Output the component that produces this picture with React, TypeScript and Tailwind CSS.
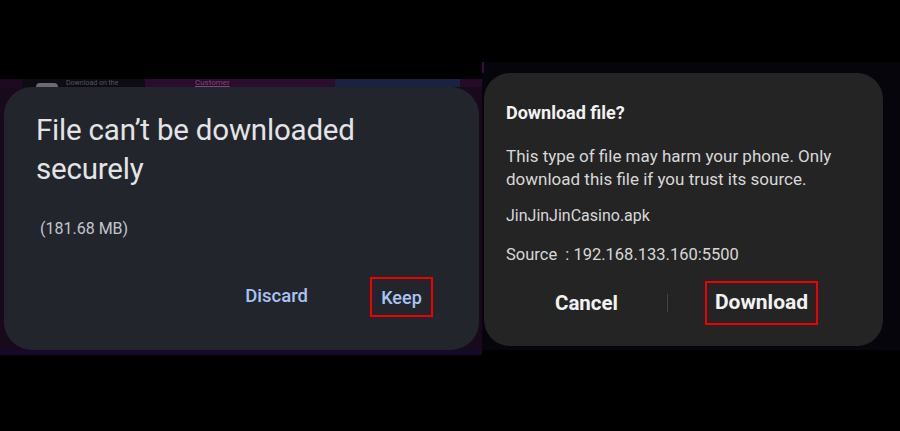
export default function App() {
  return (
    <div className="w-[900px] h-[431px] bg-black flex overflow-hidden font-['Roboto',sans-serif]">
      {/* Left screenshot: Chrome style dialog */}
      <div className="w-[482px] mt-[79px] h-[276px] bg-[#180a1c] flex flex-col">
        <div className="h-[8px] flex overflow-hidden">
          <div className="w-[22px] bg-[#1d0a20]" />
          <div className="w-[123px] bg-[#0c0c12] flex items-end pl-[14px] gap-[8px]">
            <div className="w-[22px] h-[4px] rounded-t-full bg-[#6a6a72]" />
            <span className="text-[7px] leading-[8px] text-[#55555e]">Download on the</span>
          </div>
          <div className="w-[190px] bg-[#2a0c2c] flex items-end pl-[50px]">
            <span className="text-[8px] leading-[8px] text-[#7a4a78] underline">Customer</span>
          </div>
          <div className="w-[125px] bg-[#1a2244]" />
          <div className="flex-1 bg-[#260a28]" />
        </div>
        <div className="ml-[4px] w-[475px] h-[263px] rounded-[28px] bg-[#23252c] pt-[24px] pl-[32px] flex flex-col">
          <h1 className="text-[29.5px] leading-[39px] text-[#e4e4e6] tracking-[-0.2px]">
            File can’t be downloaded
            <br />
            securely
          </h1>
          <p className="mt-[28px] ml-[4px] text-[16px] leading-[24px] text-[#c4c6cc]">(181.68 MB)</p>
          <div className="mt-[36px] flex justify-end items-center pr-[46px]">
            <span className="text-[18.5px] font-medium text-[#a9c3f2] mr-[62px]">Discard</span>
            <span className="border-2 border-[#f00000] h-[40px] w-[63px] flex items-center justify-center text-[18px] font-medium text-[#a9c3f2]">
              Keep
            </span>
          </div>
        </div>
        <div className="flex-1 bg-[#150a2a]" />
      </div>

      {/* Right screenshot: Samsung style dialog */}
      <div className="w-[418px] mt-[62px] h-[288px] bg-[#06050b] flex">
        <div className="w-[2px] h-[11px] bg-[#3a0e3c]" />
        <div className="mt-[11px] w-[399px] h-[273px] rounded-[26px] bg-[#242424] pt-[28px] pl-[22px] flex flex-col">
          <h2 className="text-[18px] leading-[24px] font-bold text-[#f3f3f3]">Download file?</h2>
          <p className="mt-[20px] text-[17px] leading-[23px] text-[#d8d8d8]">
            This type of file may harm your phone. Only
            <br />
            download this file if you trust its source.
          </p>
          <p className="mt-[13px] text-[16px] leading-[23px] text-[#d8d8d8]">JinJinJinCasino.apk</p>
          <p className="mt-[16px] text-[16.5px] leading-[23px] text-[#d8d8d8]">Source&nbsp;&nbsp;: 192.168.133.160:5500</p>
          <div className="mt-[15px] flex items-center">
            <span className="w-[161px] text-center text-[20.5px] font-bold text-[#f2f2f2]">Cancel</span>
            <div className="w-[1px] h-[18px] bg-[#444444]" />
            <div className="ml-[37px] border-2 border-[#f00000] h-[44px] w-[113px] flex items-center justify-center text-[21px] font-bold text-[#f2f2f2]">
              Download
            </div>
          </div>
        </div>
      </div>
    </div>
  );
}
